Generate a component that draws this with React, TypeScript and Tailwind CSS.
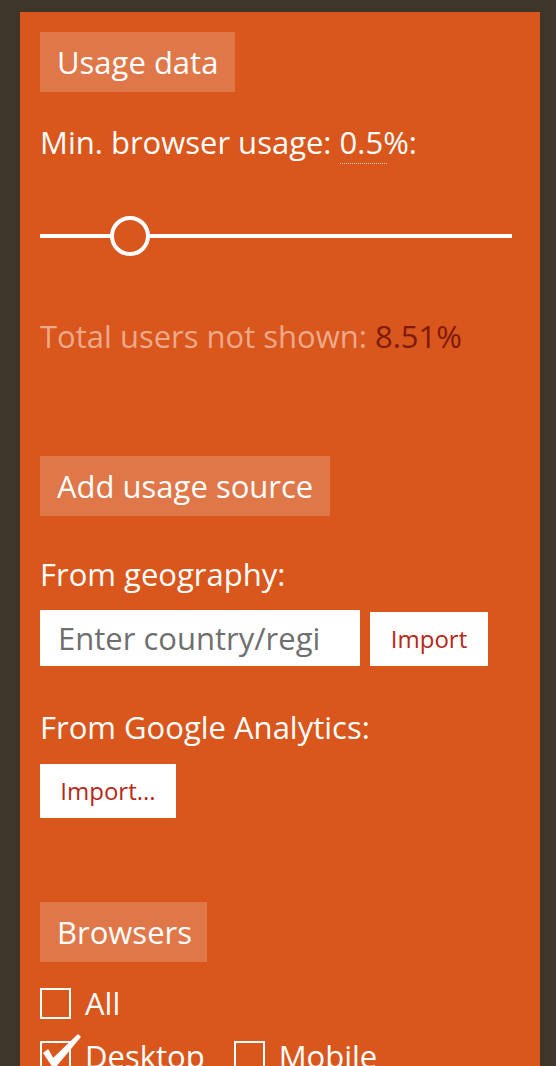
import React, { useState } from "react";

const font = { fontFamily: '"Open Sans", "Noto Sans", sans-serif' };

// Light box used for the section titles
const SectionTitle = ({ children, className = "" }: { children: React.ReactNode; className?: string }) => (
  <div className={`inline-flex h-[60px] items-center bg-white/20 px-[17px] text-[31px] leading-none text-white ${className}`}>
    {children}
  </div>
);

const Checkbox = ({ checked, label }: { checked?: boolean; label: string }) => (
  <label className="flex h-[45px] items-center gap-[14px] text-[31px] leading-[45px] text-white">
    <span className="relative inline-block h-[31px] w-[31px] shrink-0 border-2 border-white">
      {checked && (
        <svg
          className="absolute left-[-1px] top-[-9px] overflow-visible"
          width="42"
          height="40"
          viewBox="0 0 42 40"
        >
          <path d="M3 19 L7 16 L12 25 L37 1 L39 3 L13 34 Z" fill="white" stroke="white" strokeWidth="1.5" strokeLinejoin="round" />
        </svg>
      )}
    </span>
    <span>{label}</span>
  </label>
);

export default function App() {
  const [country, setCountry] = useState("");

  return (
    <div className="min-h-[1066px] overflow-hidden bg-[#3d3629] pt-[12px] pl-[20px] pr-[16px]" style={font}>
      <div className="h-[1100px] bg-[#d9561c] pt-[20px] pl-[20px] pr-[28px]">
        {/* Usage data */}
        <SectionTitle>Usage data</SectionTitle>

        <div className="mt-[28px] text-[31px] leading-[45px] text-white">
          Min. browser usage:{" "}
          <span className="mr-[-4px] border-b border-dotted border-white/70 pr-[4px]">0.5</span>%:
        </div>

        {/* Slider */}
        <div className="relative mt-[51px] flex h-[40px] items-center">
          <div className="h-[4px] w-full bg-white" />
          <div className="absolute left-[70px] top-0 h-[40px] w-[40px] rounded-full border-[4px] border-white bg-[#d9561c]" />
        </div>

        <div className="mt-[58px] text-[31px] leading-[45px] text-[#eea98b]">
          Total users not shown: <span className="text-[#7e1a0b]">8.51%</span>
        </div>

        {/* Add usage source */}
        <SectionTitle className="mt-[97px]">Add usage source</SectionTitle>

        <div className="mt-[36px] text-[31px] leading-[45px] text-white">From geography:</div>
        <div className="mt-[13px] flex items-end gap-[10px]">
          <input
            value={country}
            onChange={(e) => setCountry(e.target.value)}
            placeholder="Enter country/region"
            className="h-[56px] w-[320px] bg-white pl-[18px] pr-[41px] text-[31px] text-gray-800 outline-none placeholder:text-[#6f6f6f]"
            style={font}
          />
          <button className="h-[54px] w-[118px] bg-white text-[24px] text-[#b52a17]" style={font}>
            Import
          </button>
        </div>

        <div className="mt-[39px] text-[31px] leading-[45px] text-white">From Google Analytics:</div>
        <button className="mt-[14px] h-[54px] w-[136px] bg-white text-[24px] text-[#b52a17]" style={font}>
          Import...
        </button>

        {/* Browsers */}
        <div>
          <SectionTitle className="mt-[84px] pr-[15px]">Browsers</SectionTitle>
        </div>
        <div className="mt-[19px]">
          <Checkbox label="All" />
        </div>
        <div className="mt-[8px] flex gap-[29px]">
          <Checkbox checked label="Desktop" />
          <Checkbox label="Mobile" />
        </div>
      </div>
    </div>
  );
}
